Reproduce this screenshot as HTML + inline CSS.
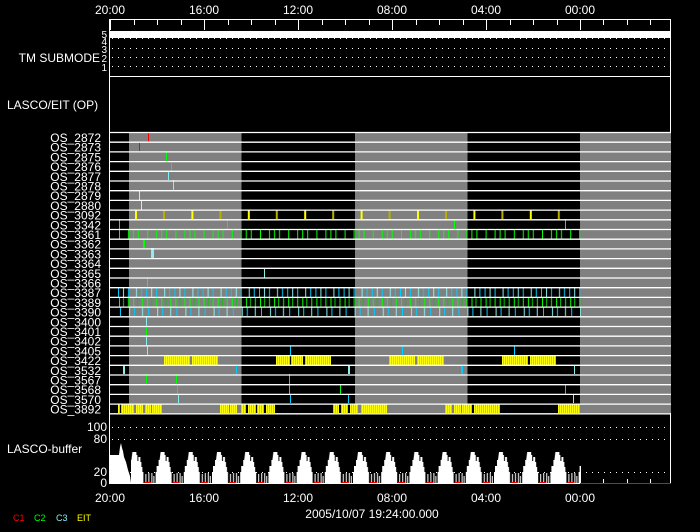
<!DOCTYPE html>
<html><head><meta charset="utf-8"><style>
html,body{margin:0;padding:0;background:#000;}
svg{display:block;}
text{font-family:"Liberation Sans",sans-serif;fill:#fff;}
</style></head><body>
<svg width="700" height="532" viewBox="0 0 700 532" xmlns="http://www.w3.org/2000/svg">
<defs>
<pattern id="p3092" x="135" y="0" width="56.4" height="600" patternUnits="userSpaceOnUse">
<rect x="0" y="210" width="2" height="9" fill="#ff0"/>
<rect x="28" y="210" width="2" height="9" fill="#b8b000"/>
</pattern>
<pattern id="p3361" x="119" y="0" width="28.2" height="600" patternUnits="userSpaceOnUse">
<rect x="0" y="229" width="1" height="10" fill="#0f0"/>
<rect x="9" y="229" width="1" height="10" fill="#0f0"/>
<rect x="14" y="229" width="1" height="10" fill="#0f0"/>
<rect x="19" y="229" width="1" height="10" fill="#0f0"/>
</pattern>
<pattern id="p3387" x="118" y="0" width="28.2" height="600" patternUnits="userSpaceOnUse">
<rect x="0" y="288" width="1" height="9" fill="#0cf"/>
<rect x="5" y="288" width="1" height="9" fill="#8ee"/>
<rect x="10" y="288" width="1" height="9" fill="#0cf"/>
<rect x="18" y="288" width="1" height="9" fill="#8ee"/>
<rect x="23" y="288" width="1" height="9" fill="#0cf"/>
</pattern>
<pattern id="p3389" x="119" y="0" width="14.1" height="600" patternUnits="userSpaceOnUse">
<rect x="0" y="297" width="1" height="10" fill="#0f0"/>
<rect x="4" y="297" width="1" height="10" fill="#0c0"/>
<rect x="9" y="297" width="1" height="10" fill="#0f0"/>
</pattern>
<pattern id="p3390" x="120" y="0" width="28.2" height="600" patternUnits="userSpaceOnUse">
<rect x="0" y="307" width="1" height="9" fill="#0cf"/>
<rect x="9" y="307" width="1" height="9" fill="#8ee"/>
<rect x="14" y="307" width="1" height="9" fill="#0cf"/>
<rect x="22" y="307" width="1" height="9" fill="#8ee"/>
</pattern>
<pattern id="pY" x="0" y="0" width="2" height="600" patternUnits="userSpaceOnUse">
<rect x="0" y="0" width="1.4" height="600" fill="#ff0"/><rect x="1.4" y="0" width="0.6" height="600" fill="#cc0"/>
</pattern>
<pattern id="pBuf" x="212" y="0" width="28.2" height="600" patternUnits="userSpaceOnUse">
<path d="M0 483 V472 L1 472 L1 466 L3 466 L3 460 L4 460 L5 452 L9 452 L9 455 L10 455 L10 461 L11 461 L11 457 L13 457 L13 462 L14 462 L14 467 L15 467 L15 472 L16 472 L16 483 Z M18 483 V474 L19 474 L19 483 Z M21 483 V473 L22 473 L22 483 Z M24 483 V473 L25 473 L25 483 Z M26 483 V476 L27 476 L27 483 Z" fill="#fff"/>
<rect x="17" y="482" width="7" height="1" fill="#f00"/>
</pattern>
</defs>

<g font-size="12" text-anchor="middle">
<text x="110" y="14">20:00</text><text x="204" y="14">16:00</text><text x="298" y="14">12:00</text>
<text x="392" y="14">08:00</text><text x="486" y="14">04:00</text><text x="580" y="14">00:00</text>
<text x="110" y="502">20:00</text><text x="204" y="502">16:00</text><text x="298" y="502">12:00</text>
<text x="392" y="502">08:00</text><text x="486" y="502">04:00</text><text x="580" y="502">00:00</text>
<text x="372" y="518">2005/10/07 19:24:00.000</text>
</g>

<rect x="109.5" y="19.5" width="561" height="464" fill="none" stroke="#fff" stroke-width="1"/>
<g stroke="#fff" stroke-width="1">
<path d="M110.5 20V30 M204.5 20V30 M298.5 20V30 M392.5 20V30 M486.5 20V30 M580.5 20V30"/>
<path d="M134.5 20V25 M157.5 20V25 M181.5 20V25 M228.5 20V25 M251.5 20V25 M275.5 20V25 M322.5 20V25 M345.5 20V25 M369.5 20V25 M416.5 20V25 M439.5 20V25 M463.5 20V25 M510.5 20V25 M533.5 20V25 M557.5 20V25 M603.5 20V25 M627.5 20V25 M650.5 20V25"/>
</g>

<rect x="110" y="31" width="561" height="7" fill="#fff"/>
<g stroke="#fff" stroke-width="1" stroke-dasharray="1 5">
<line x1="112" y1="38.5" x2="670" y2="38.5"/><line x1="112" y1="48.5" x2="670" y2="48.5"/>
<line x1="112" y1="57.5" x2="670" y2="57.5"/><line x1="112" y1="66.5" x2="670" y2="66.5"/>
</g>
<g font-size="10" text-anchor="end">
<text x="107" y="38">5</text><text x="107" y="45">4</text><text x="107" y="53">3</text><text x="107" y="62">2</text><text x="107" y="71">1</text>
</g>
<text x="100" y="62" font-size="12" text-anchor="end">TM SUBMODE</text>
<line x1="109" y1="76.5" x2="671" y2="76.5" stroke="#fff"/>
<text x="7" y="109" font-size="12">LASCO/EIT (OP)</text>

<rect x="129" y="132" width="112.5" height="281" fill="#808080"/>
<rect x="355" y="132" width="112.5" height="281" fill="#808080"/>
<rect x="580" y="132" width="91" height="281" fill="#808080"/>

<rect x="119" y="200" width="462" height="20" fill="url(#p3092)"/>
<rect x="119" y="229" width="462" height="10" fill="url(#p3361)"/>
<rect x="117" y="287" width="464" height="10" fill="url(#p3387)"/>
<rect x="119" y="297" width="462" height="10" fill="url(#p3389)"/>
<rect x="119" y="307" width="462" height="10" fill="url(#p3390)"/>
<g fill="url(#pY)">
<rect x="164" y="355" width="26" height="10"/><rect x="192" y="355" width="26" height="10"/>
<rect x="276" y="355" width="14" height="10"/><rect x="291" y="355" width="12" height="10"/><rect x="305" y="355" width="26" height="10"/>
<rect x="389" y="355" width="26" height="10"/><rect x="417" y="355" width="27" height="10"/>
<rect x="502" y="355" width="26" height="10"/><rect x="530" y="355" width="26" height="10"/>
<rect x="118" y="404" width="2" height="9"/><rect x="121" y="404" width="13" height="9"/><rect x="136" y="404" width="7" height="9"/><rect x="145" y="404" width="6" height="9"/><rect x="152" y="404" width="10" height="9"/>
<rect x="220" y="404" width="9" height="9"/><rect x="230" y="404" width="7" height="9"/><rect x="241" y="404" width="5" height="9"/><rect x="248" y="404" width="8" height="9"/><rect x="257" y="404" width="7" height="9"/><rect x="266" y="404" width="9" height="9"/>
<rect x="333" y="404" width="6" height="9"/><rect x="341" y="404" width="7" height="9"/><rect x="350" y="404" width="8" height="9"/><rect x="361" y="404" width="26" height="9"/>
<rect x="445" y="404" width="7" height="9"/><rect x="454" y="404" width="7" height="9"/><rect x="462" y="404" width="10" height="9"/><rect x="474" y="404" width="26" height="9"/>
<rect x="558" y="404" width="22" height="9"/>
</g>
<g>
<rect x="148" y="132" width="1" height="10" fill="#f00"/>
<rect x="139" y="142" width="1" height="9" fill="#f00"/>
<rect x="166" y="151" width="1" height="10" fill="#0f0"/>
<rect x="171" y="161" width="1" height="10" fill="#0f0"/>
<rect x="168" y="171" width="1" height="9" fill="#8ee"/>
<rect x="173" y="180" width="1" height="10" fill="#8ee"/>
<rect x="139" y="190" width="1" height="10" fill="#ff0"/>
<rect x="141" y="200" width="1" height="10" fill="#ff0"/>
<rect x="119" y="219" width="1" height="20" fill="#0f0"/>
<rect x="227" y="219" width="1" height="10" fill="#0f0"/>
<rect x="454" y="219" width="1" height="10" fill="#0f0"/>
<rect x="565" y="219" width="1" height="10" fill="#0f0"/>
<rect x="143" y="239" width="2" height="9" fill="#0f0"/>
<rect x="151" y="248" width="3" height="10" fill="#8ee"/>
<rect x="264" y="268" width="1" height="10" fill="#8ee"/>
<rect x="147" y="278" width="1" height="9" fill="#b8b000"/>
<rect x="146" y="316" width="1" height="10" fill="#8ee"/>
<rect x="146" y="326" width="1" height="10" fill="#0f0"/>
<rect x="146" y="336" width="1" height="10" fill="#8ee"/>
<rect x="147" y="346" width="1" height="9" fill="#8ee"/>
<rect x="290" y="346" width="1" height="9" fill="#0cf"/><rect x="402" y="346" width="1" height="9" fill="#0cf"/><rect x="514" y="346" width="1" height="9" fill="#0cf"/>
<rect x="123" y="365" width="2" height="9" fill="#8ee"/><rect x="236" y="365" width="1" height="9" fill="#0cf"/><rect x="348" y="365" width="2" height="9" fill="#8ee"/><rect x="461" y="365" width="2" height="9" fill="#0cf"/><rect x="574" y="365" width="1" height="9" fill="#8ee"/>
<rect x="146" y="374" width="1" height="10" fill="#0f0"/><rect x="176" y="374" width="1" height="10" fill="#0f0"/><rect x="289" y="374" width="1" height="20" fill="#0f0"/><rect x="340" y="384" width="1" height="10" fill="#0f0"/><rect x="565" y="384" width="1" height="10" fill="#0f0"/>
<rect x="177" y="384" width="1" height="10" fill="#0f0"/>
<rect x="178" y="394" width="1" height="9" fill="#8ee"/><rect x="290" y="394" width="1" height="9" fill="#0cf"/><rect x="348" y="394" width="1" height="9" fill="#0cf"/><rect x="573" y="394" width="1" height="9" fill="#8ee"/>
</g>
<g stroke="#fff" stroke-width="1.3">
<path d="M109 132.5H671 M109 142.2H671 M109 151.9H671 M109 161.6H671 M109 171.3H671 M109 181H671 M109 190.7H671 M109 200.4H671 M109 210.1H671 M109 219.8H671 M109 229.5H671 M109 239.2H671 M109 248.9H671 M109 258.6H671 M109 268.3H671 M109 278H671 M109 287.7H671 M109 297.4H671 M109 307.1H671 M109 316.8H671 M109 326.5H671 M109 336.2H671 M109 345.9H671 M109 355.6H671 M109 365.3H671 M109 375H671 M109 384.7H671 M109 394.4H671 M109 404.1H671 M109 413.8H671"/>
</g>
<g font-size="12" text-anchor="end">
<text x="101" y="142">OS_2872</text><text x="101" y="151.7">OS_2873</text><text x="101" y="161.4">OS_2875</text><text x="101" y="171.1">OS_2876</text><text x="101" y="180.8">OS_2877</text><text x="101" y="190.5">OS_2878</text><text x="101" y="200.2">OS_2879</text><text x="101" y="209.9">OS_2880</text><text x="101" y="219.6">OS_3092</text><text x="101" y="229.3">OS_3342</text><text x="101" y="239">OS_3361</text><text x="101" y="248.7">OS_3362</text><text x="101" y="258.4">OS_3363</text><text x="101" y="268.1">OS_3364</text><text x="101" y="277.8">OS_3365</text><text x="101" y="287.5">OS_3366</text><text x="101" y="297.2">OS_3387</text><text x="101" y="306.9">OS_3389</text><text x="101" y="316.6">OS_3390</text><text x="101" y="326.3">OS_3400</text><text x="101" y="336">OS_3401</text><text x="101" y="345.7">OS_3402</text><text x="101" y="355.4">OS_3405</text><text x="101" y="365.1">OS_3422</text><text x="101" y="374.8">OS_3532</text><text x="101" y="384.5">OS_3567</text><text x="101" y="394.2">OS_3568</text><text x="101" y="403.9">OS_3570</text><text x="101" y="413.6">OS_3892</text>
</g>

<g stroke="#fff" stroke-width="1" stroke-dasharray="1 5">
<line x1="112" y1="427.5" x2="670" y2="427.5"/><line x1="112" y1="439.5" x2="670" y2="439.5"/><line x1="112" y1="472.5" x2="670" y2="472.5"/>
</g>
<rect x="131" y="440" width="450" height="44" fill="url(#pBuf)"/>
<path d="M110 483 V455 L119 455 L120 447 L121 443 L122 448 L123 451 L124 457 L126 462 L128 470 L130 476 L131 483 Z" fill="#fff"/>
<line x1="580" y1="483.5" x2="671" y2="483.5" stroke="#f00"/>
<path d="M603.5 479V483 M627.5 479V483 M650.5 479V483" stroke="#fff"/>
<g font-size="12" text-anchor="end">
<text x="107" y="431">100</text><text x="107" y="443">80</text><text x="107" y="476">20</text><text x="107" y="487">0</text>
</g>
<text x="7" y="453" font-size="12">LASCO-buffer</text>

<g font-size="9">
<text x="13" y="521" style="fill:#f00">C1</text>
<text x="34" y="521" style="fill:#0f0">C2</text>
<text x="56" y="521" style="fill:#8ee">C3</text>
<text x="77" y="521" style="fill:#ff0">EIT</text>
</g>
</svg>
</body></html>
